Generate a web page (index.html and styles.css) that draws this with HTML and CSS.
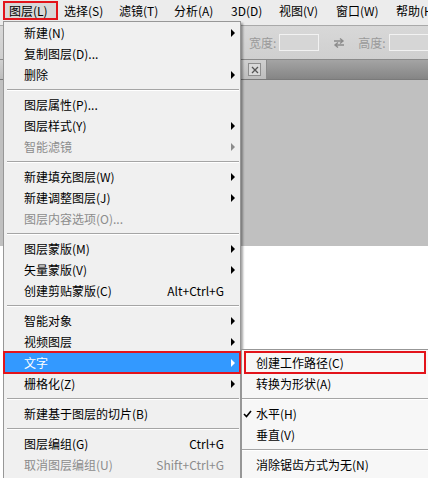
FILE: index.html
```html
<!DOCTYPE html>
<html lang="zh-CN">
<head>
<meta charset="utf-8">
<title>图层菜单</title>
<link rel="stylesheet" href="styles.css">
</head>
<body>
<div class="app">
  <div class="menubar">
    <span class="mb-item active">图层(L)</span>
    <span class="mb-item">选择(S)</span>
    <span class="mb-item">滤镜(T)</span>
    <span class="mb-item">分析(A)</span>
    <span class="mb-item">3D(D)</span>
    <span class="mb-item">视图(V)</span>
    <span class="mb-item">窗口(W)</span>
    <span class="mb-item">帮助(H)</span>
  </div>
  <div class="options">
    <span class="opt-label">宽度:</span>
    <span class="opt-input"></span>
    <svg class="swap" width="12" height="10" viewBox="0 0 12 10">
      <path d="M1 3h9M7 0.5l3 2.5-3 2.5" fill="none" stroke="#8c8c8c" stroke-width="1.4"/>
      <path d="M11 7H2M5 4.5L2 7l3 2.5" fill="none" stroke="#8c8c8c" stroke-width="1.4"/>
    </svg>
    <span class="opt-label">高度:</span>
    <span class="opt-input wide"></span>
  </div>
  <div class="tabs">
    <div class="tab">
      <span class="tab-close">
        <svg width="8" height="8" viewBox="0 0 8 8"><path d="M1 1l6 6M7 1L1 7" stroke="#555" stroke-width="1.3"/></svg>
      </span>
    </div>
    <div class="tab-rest"></div>
  </div>
  <div class="canvas"></div>
  <div class="doc"></div>
</div>

<div class="menu">
  <div class="row"><span class="label">新建(N)</span><span class="arrow"></span></div>
  <div class="row"><span class="label">复制图层(D)...</span><span class="slot"></span></div>
  <div class="row"><span class="label">删除</span><span class="arrow"></span></div>
  <div class="sep"></div>
  <div class="row"><span class="label">图层属性(P)...</span><span class="slot"></span></div>
  <div class="row"><span class="label">图层样式(Y)</span><span class="arrow"></span></div>
  <div class="row disabled"><span class="label">智能滤镜</span><span class="arrow"></span></div>
  <div class="sep"></div>
  <div class="row"><span class="label">新建填充图层(W)</span><span class="arrow"></span></div>
  <div class="row"><span class="label">新建调整图层(J)</span><span class="arrow"></span></div>
  <div class="row disabled"><span class="label">图层内容选项(O)...</span><span class="slot"></span></div>
  <div class="sep"></div>
  <div class="row"><span class="label">图层蒙版(M)</span><span class="arrow"></span></div>
  <div class="row"><span class="label">矢量蒙版(V)</span><span class="arrow"></span></div>
  <div class="row"><span class="label">创建剪贴蒙版(C)</span><span class="key">Alt+Ctrl+G</span><span class="slot"></span></div>
  <div class="sep"></div>
  <div class="row"><span class="label">智能对象</span><span class="arrow"></span></div>
  <div class="row"><span class="label">视频图层</span><span class="arrow"></span></div>
  <div class="row selected"><span class="label">文字</span><span class="arrow"></span></div>
  <div class="row"><span class="label">栅格化(Z)</span><span class="arrow"></span></div>
  <div class="sep"></div>
  <div class="row"><span class="label">新建基于图层的切片(B)</span><span class="slot"></span></div>
  <div class="sep"></div>
  <div class="row"><span class="label">图层编组(G)</span><span class="key">Ctrl+G</span><span class="slot"></span></div>
  <div class="row disabled"><span class="label">取消图层编组(U)</span><span class="key">Shift+Ctrl+G</span><span class="slot"></span></div>
</div>

<div class="submenu">
  <div class="srow marked"><span class="mark"></span><span class="label">创建工作路径(C)</span></div>
  <div class="srow"><span class="mark"></span><span class="label">转换为形状(A)</span></div>
  <div class="ssep"></div>
  <div class="srow"><span class="mark"><svg width="9" height="8" viewBox="0 0 9 8"><path d="M1 4l2.5 2.5L8 1" fill="none" stroke="#000" stroke-width="1.6"/></svg></span><span class="label">水平(H)</span></div>
  <div class="srow"><span class="mark"></span><span class="label">垂直(V)</span></div>
  <div class="ssep"></div>
  <div class="srow"><span class="mark"></span><span class="label">消除锯齿方式为无(N)</span></div>
</div>
</body>
</html>
```
FILE: styles.css
```css
* { box-sizing: border-box; }
html, body {
  margin: 0;
  padding: 0;
}
body {
  width: 428px;
  height: 478px;
  overflow: hidden;
  position: relative;
  font-family: "Noto Sans CJK SC", "Noto Sans", sans-serif;
  font-size: 12px;
  color: #000;
  background: #fff;
}

.app {
  display: flex;
  flex-direction: column;
  height: 478px;
}

/* menu bar */
.menubar {
  height: 26px;
  flex: none;
  display: grid;
  grid-template-columns: 55px 55px 55px 57px 48px 57px 60px 60px;
  padding: 1px 0 0 3px;
  background: #ececec;
  border-bottom: 1px solid #a9a9a9;
}
.mb-item {
  height: 19px;
  line-height: 19px;
  padding-left: 6px;
  white-space: nowrap;
}
.mb-item.active {
  background: #d8d8d8;
  box-shadow: inset 0 0 0 2px #e3141b;
}

/* options bar */
.options {
  height: 34px;
  flex: none;
  display: flex;
  align-items: center;
  padding-left: 249px;
  background: linear-gradient(#d8d8d8, #cfcfcf);
  border-bottom: 1px solid #8a8a8a;
  color: #9a9a9a;
}
.opt-label {
  white-space: nowrap;
}
.opt-input {
  width: 40px;
  height: 17px;
  margin-left: 3px;
  background: #d6d6d6;
  border: 1px solid #f2f2f2;
  flex: none;
}
.opt-input.wide { width: 60px; }
.swap {
  margin: 0 13px 0 14px;
  flex: none;
}

/* tabs */
.tabs {
  height: 20px;
  flex: none;
  display: flex;
  border-bottom: 1px solid #7a7a7a;
}
.tab {
  width: 267px;
  background: linear-gradient(#d0d0d0, #bdbdbd);
  display: flex;
  align-items: center;
  justify-content: flex-end;
  padding-right: 5px;
  border-right: 1px solid #8a8a8a;
}
.tab-close {
  width: 13px;
  height: 13px;
  border: 1px solid #8e8e8e;
  background: #d9d9d9;
  display: flex;
  align-items: center;
  justify-content: center;
}
.tab-rest {
  flex: 1;
  background: linear-gradient(#a4a4a4, #858585);
}
.canvas {
  height: 166px;
  flex: none;
  background: #c0c0c0;
}
.doc {
  flex: 1;
  background: #fff;
}

/* main dropdown menu (overlay) */
.menu {
  position: absolute;
  left: 3px;
  top: 21px;
  width: 238px;
  padding-bottom: 6px;
  background: #f0f0f0;
  border: 1px solid #979797;
  box-shadow: 2px 2px 2px rgba(0, 0, 0, 0.35);
}
.row {
  display: flex;
  align-items: center;
  height: 21px;
  line-height: 21px;
  padding: 0 5px 0 20px;
  white-space: nowrap;
}
.row .label { flex: 1; }
.row .key { flex: none; }
.row .slot,
.row .arrow {
  width: 11px;
  height: 8px;
  flex: none;
  display: flex;
  justify-content: flex-end;
}
.row .arrow::after {
  content: "";
  width: 0;
  height: 0;
  border-left: 4px solid #000;
  border-top: 4px solid transparent;
  border-bottom: 4px solid transparent;
}
.row.disabled { color: #8c8c8c; }
.row.disabled .arrow::after { border-left-color: #8c8c8c; }
.row.selected {
  background: #3399ff;
  color: #fff;
  outline: 2px solid #e3141b;
  outline-offset: -1px;
}
.row.selected .arrow::after { border-left-color: #fff; }
.sep {
  height: 0;
  margin: 4px 1px 3px 3px;
  border-top: 1px solid #a5a5a5;
  border-bottom: 1px solid #ffffff;
}

/* submenu (overlay) */
.submenu {
  position: absolute;
  left: 241px;
  top: 349px;
  width: 190px;
  background: #f7f7f7;
  border: 1px solid #979797;
  padding: 2px 5px 6px 3px;
}
.srow {
  display: flex;
  align-items: center;
  height: 21px;
  line-height: 21px;
  white-space: nowrap;
}
.srow .mark {
  width: 13px;
  flex: none;
  display: flex;
  align-items: center;
  margin-left: -2px;
  padding-right: 2px;
}
.srow.marked {
  outline: 2px solid #e3141b;
  outline-offset: -1px;
}
.ssep {
  height: 0;
  margin: 4px -5px 3px -3px;
  border-top: 1px solid #a5a5a5;
  border-bottom: 1px solid #ffffff;
}
```
